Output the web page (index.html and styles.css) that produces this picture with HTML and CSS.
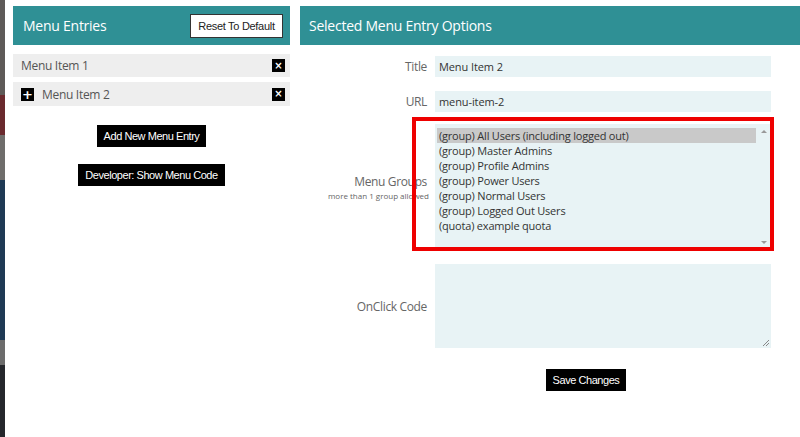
FILE: index.html
```html
<!DOCTYPE html>
<html>
<head>
<meta charset="utf-8">
<link rel="stylesheet" href="styles.css">
</head>
<body>
<div class="page">
  <div class="edge">
    <div class="e1"></div><div class="e2"></div><div class="e3"></div><div class="e4"></div><div class="e5"></div><div class="e6"></div>
  </div>
  <div class="main">
    <div class="left">
      <div class="head">
        <span class="head-title">Menu Entries</span>
        <button class="reset">Reset To Default</button>
      </div>
      <div class="entry first">
        <span class="entry-text">Menu Item 1</span>
        <span class="sq">&#215;</span>
      </div>
      <div class="entry second">
        <span class="sq plus">+</span>
        <span class="entry-text">Menu Item 2</span>
        <span class="sq">&#215;</span>
      </div>
      <div class="actions">
        <button class="btn">Add New Menu Entry</button>
        <button class="btn">Developer: Show Menu Code</button>
      </div>
    </div>
    <div class="right">
      <div class="head">
        <span class="head-title">Selected Menu Entry Options</span>
      </div>
      <div class="form">
        <div class="label l-title">Title</div>
        <div class="field input">Menu Item 2</div>
        <div class="label l-url">URL</div>
        <div class="field input i-url">menu-item-2</div>
        <div class="label groups"><div>Menu Groups</div><div class="sub">more than 1 group allowed</div></div>
        <div class="field select">
          <div class="options">
            <div class="opt sel">(group) All Users (including logged out)</div>
            <div class="opt">(group) Master Admins</div>
            <div class="opt">(group) Profile Admins</div>
            <div class="opt">(group) Power Users</div>
            <div class="opt">(group) Normal Users</div>
            <div class="opt">(group) Logged Out Users</div>
            <div class="opt">(quota) example quota</div>
          </div>
          <div class="scroll"><span class="arr up"></span><span class="arr down"></span></div>
          <div class="redbox"></div>
        </div>
        <div class="label l-code">OnClick Code</div>
        <div class="field textarea">
          <svg class="grip" width="8" height="8" viewBox="0 0 8 8"><path d="M7 1 L1 7 M7 4 L4 7" stroke="#888" stroke-width="1" fill="none"/></svg>
        </div>
        <div></div>
        <div class="save-row"><button class="btn">Save Changes</button></div>
      </div>
    </div>
  </div>
</div>
</body>
</html>
```
FILE: styles.css
```css
html, body { margin: 0; padding: 0; background: #fff; }
body { font-family: "Open Sans", "Noto Sans", sans-serif; width: 800px; height: 437px; overflow: hidden; }
.page { display: flex; height: 437px; }
.edge { width: 5px; display: flex; flex-direction: column; }
.e1 { height: 95px; background: #5e5a58; }
.e2 { height: 40px; background: #6a2a2e; }
.e3 { height: 45px; background: #6f6d6b; }
.e4 { height: 160px; background: #1f3a55; }
.e5 { height: 25px; background: #6c6c6c; }
.e6 { flex: 1; background: #25272c; }
.main { flex: 1; display: flex; gap: 10px; padding: 6px 0 0 8px; }
.left { width: 277px; display: flex; flex-direction: column; }
.right { flex: 1; display: flex; flex-direction: column; }
.head { height: 39px; background: #2f9095; display: flex; align-items: center; justify-content: space-between; padding: 0 7px 0 10px; }
.right .head { padding-left: 9px; }
.head-title { color: #fff; font-size: 14px; letter-spacing: -0.25px; }
.reset { font-family: "Liberation Sans", Arial, sans-serif; font-size: 11px; letter-spacing: -0.3px; color: #222; background: #fff; border: 1px solid #333; height: 24px; width: 93px; padding: 0; }
.entry { background: #eeeeee; display: flex; align-items: center; padding: 0 5px 0 8px; font-size: 12px; letter-spacing: -0.3px; color: #555; }
.entry.first { height: 23px; margin-top: 9px; }
.entry.second { height: 24px; margin-top: 5px; }
.entry-text { flex: 1; }
.sq { width: 13px; height: 13px; background: #000; color: #fff; font-family: "DejaVu Sans", sans-serif; font-size: 10px; font-weight: bold; display: flex; align-items: center; justify-content: center; line-height: 1; letter-spacing: 0; }
.sq.plus { margin-right: 8px; font-size: 13px; }
.actions { display: flex; flex-direction: column; align-items: center; gap: 17px; margin-top: 19px; }
.btn { font-family: "Liberation Sans", Arial, sans-serif; font-size: 11px; letter-spacing: -0.45px; color: #fff; background: #000; border: 0; padding: 0 7px; height: 22px; }
.form { display: grid; grid-template-columns: 127px 336px; column-gap: 8px; margin-top: 11px; }
.label { font-size: 12px; letter-spacing: -0.35px; color: #666; text-align: right; align-self: center; }
.l-url, .i-url { margin-top: 14px; }
.groups { line-height: 16px; padding-top: 4px; margin-top: 12px; }
.sub { font-size: 8px; line-height: 12px; letter-spacing: 0; margin-right: -2px; }
.field { background: #e8f3f5; }
.input { height: 21px; font-size: 11px; letter-spacing: -0.1px; color: #333; display: flex; align-items: center; padding-left: 4px; box-sizing: border-box; }
.select { height: 124px; margin-top: 12px; position: relative; display: flex; }
.options { flex: 1; padding: 4px 0 0 2px; }
.opt { font-size: 11px; letter-spacing: -0.2px; line-height: 15px; color: #333; padding-left: 2px; }
.opt.sel { background: #c9c9c9; }
.scroll { width: 15px; position: relative; }
.arr { position: absolute; left: 5px; width: 0; height: 0; border-left: 3px solid transparent; border-right: 3px solid transparent; }
.arr.up { top: 6px; border-bottom: 3px solid #999; }
.arr.down { bottom: 4px; border-top: 3px solid #999; }
.redbox { position: absolute; left: -23px; right: -3px; top: -7px; bottom: -3px; border: 4px solid #ee0000; }
.textarea { height: 84px; margin-top: 16px; position: relative; }
.l-code { margin-top: 16px; }
.grip { position: absolute; right: 1px; bottom: 1px; }
.save-row { margin-top: 21px; display: flex; justify-content: center; padding-right: 34px; }
```
